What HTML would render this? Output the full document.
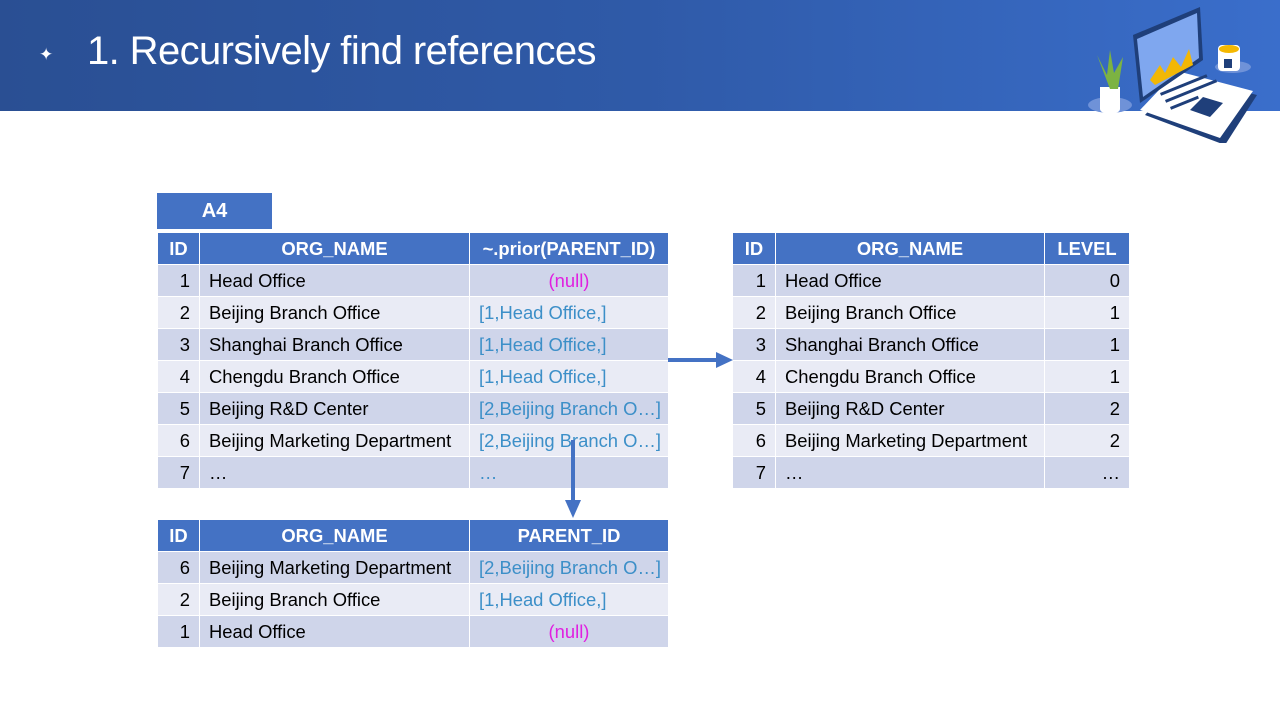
<!DOCTYPE html>
<html><head><meta charset="utf-8"><style>
*{margin:0;padding:0;box-sizing:border-box}
body{width:1280px;height:720px;position:relative;background:#fff;font-family:"Liberation Sans",Arial,sans-serif;overflow:hidden}
.bar{position:absolute;left:0;top:0;width:1280px;height:111px;background:linear-gradient(90deg,#2a4f93 0%,#2f5aa8 50%,#3a6ecb 100%)}
.title{position:absolute;left:87px;top:29px;color:#fff;font-size:40px;letter-spacing:-0.6px;white-space:nowrap}
.star{position:absolute;left:39px;top:45px;color:#fff;font-size:17px}
table{position:absolute;border-collapse:collapse;table-layout:fixed;font-size:18.4px}
td{height:32px;border:1px solid #fff;padding:0 9px;white-space:nowrap;overflow:hidden;color:#000}
tr.h td{background:#4472c4;color:#fff;font-weight:bold;text-align:center}
tr.o td{background:#cfd5ea}
tr.e td{background:#e9ebf5}
td.n{text-align:right}
.b{color:#3c8fc8}
.nl{color:#e020e0;text-align:center}
.a4{position:absolute;left:157px;top:193px;width:115px;height:36px;background:#4472c4;color:#fff;font-weight:bold;font-size:20px;text-align:center;line-height:36px}
</style></head><body>
<div class="bar"></div>
<div class="star">✦</div>
<div class="title">1. Recursively find references</div>
<svg style="position:absolute;left:1085px;top:5px" width="175" height="138" viewBox="0 0 175 138">
<ellipse cx="25" cy="100" rx="22" ry="8" fill="#6f92d8"/>
<path d="M15 82h20v22a10 5 0 0 1-20 0z" fill="#fff"/>
<path d="M25 84 L12 50 L22 70 L25 45 L29 68 L38 52 L33 84z" fill="#7cb342"/>
<path d="M60 110 L140 140 L172 90 L95 70z" fill="#1f3f7a"/>
<path d="M55 105 L135 133 L168 86 L92 66z" fill="#fff"/>
<path d="M48 30 L115 2 L118 55 L55 98z" fill="#1f3f7a"/>
<path d="M52 34 L112 8 L114 53 L58 92z" fill="#7fa7ef"/>
<path d="M65 75 L75 60 L80 68 L88 52 L96 62 L104 44 L108 60 L70 80z" fill="#f2b705"/>
<path d="M105 105 L125 112 L138 98 L118 92z" fill="#1f3f7a"/>
<g fill="#1f3f7a"><rect x="75" y="88" width="50" height="3" transform="rotate(-22 75 88)"/><rect x="80" y="95" width="55" height="3" transform="rotate(-22 80 95)"/><rect x="85" y="102" width="30" height="3" transform="rotate(-22 85 102)"/></g>
<ellipse cx="148" cy="62" rx="18" ry="6" fill="#6f92d8"/>
<rect x="133" y="40" width="22" height="26" rx="4" fill="#fff"/>
<ellipse cx="144" cy="44" rx="10" ry="4" fill="#f5b800"/>
<rect x="139" y="54" width="8" height="9" fill="#1f3f7a"/>
</svg>

<div class="a4">A4</div>
<table style="left:157px;top:232px;width:511px">
<colgroup><col style="width:42px"><col style="width:270px"><col style="width:199px"></colgroup>
<tr class="h"><td style="padding:0">ID</td><td>ORG_NAME</td><td style="padding:0">~.prior(PARENT_ID)</td></tr>
<tr class="o"><td class="n">1</td><td>Head Office</td><td class="nl">(null)</td></tr>
<tr class="e"><td class="n">2</td><td>Beijing Branch Office</td><td class="b">[1,Head Office,]</td></tr>
<tr class="o"><td class="n">3</td><td>Shanghai Branch Office</td><td class="b">[1,Head Office,]</td></tr>
<tr class="e"><td class="n">4</td><td>Chengdu Branch Office</td><td class="b">[1,Head Office,]</td></tr>
<tr class="o"><td class="n">5</td><td>Beijing R&amp;D Center</td><td class="b">[2,Beijing Branch O…]</td></tr>
<tr class="e"><td class="n">6</td><td>Beijing Marketing Department</td><td class="b">[2,Beijing Branch O…]</td></tr>
<tr class="o"><td class="n">7</td><td>…</td><td class="b">…</td></tr>
</table>

<table style="left:732px;top:232px;width:397px">
<colgroup><col style="width:43px"><col style="width:269px"><col style="width:85px"></colgroup>
<tr class="h"><td style="padding:0">ID</td><td>ORG_NAME</td><td style="padding:0">LEVEL</td></tr>
<tr class="o"><td class="n">1</td><td>Head Office</td><td class="n">0</td></tr>
<tr class="e"><td class="n">2</td><td>Beijing Branch Office</td><td class="n">1</td></tr>
<tr class="o"><td class="n">3</td><td>Shanghai Branch Office</td><td class="n">1</td></tr>
<tr class="e"><td class="n">4</td><td>Chengdu Branch Office</td><td class="n">1</td></tr>
<tr class="o"><td class="n">5</td><td>Beijing R&amp;D Center</td><td class="n">2</td></tr>
<tr class="e"><td class="n">6</td><td>Beijing Marketing Department</td><td class="n">2</td></tr>
<tr class="o"><td class="n">7</td><td>…</td><td class="n">…</td></tr>
</table>

<table style="left:157px;top:519px;width:511px">
<colgroup><col style="width:42px"><col style="width:270px"><col style="width:199px"></colgroup>
<tr class="h"><td style="padding:0">ID</td><td>ORG_NAME</td><td style="padding:0">PARENT_ID</td></tr>
<tr class="o"><td class="n">6</td><td>Beijing Marketing Department</td><td class="b">[2,Beijing Branch O…]</td></tr>
<tr class="e"><td class="n">2</td><td>Beijing Branch Office</td><td class="b">[1,Head Office,]</td></tr>
<tr class="o"><td class="n">1</td><td>Head Office</td><td class="nl">(null)</td></tr>
</table>

<svg style="position:absolute;left:0;top:0" width="1280" height="720">
<line x1="668" y1="360" x2="718" y2="360" stroke="#4472c4" stroke-width="4"/>
<polygon points="716,352 733,360 716,368" fill="#4472c4"/>
<line x1="573" y1="440" x2="573" y2="502" stroke="#4472c4" stroke-width="4"/>
<polygon points="565,500 573,518 581,500" fill="#4472c4"/>
</svg>
</body></html>
